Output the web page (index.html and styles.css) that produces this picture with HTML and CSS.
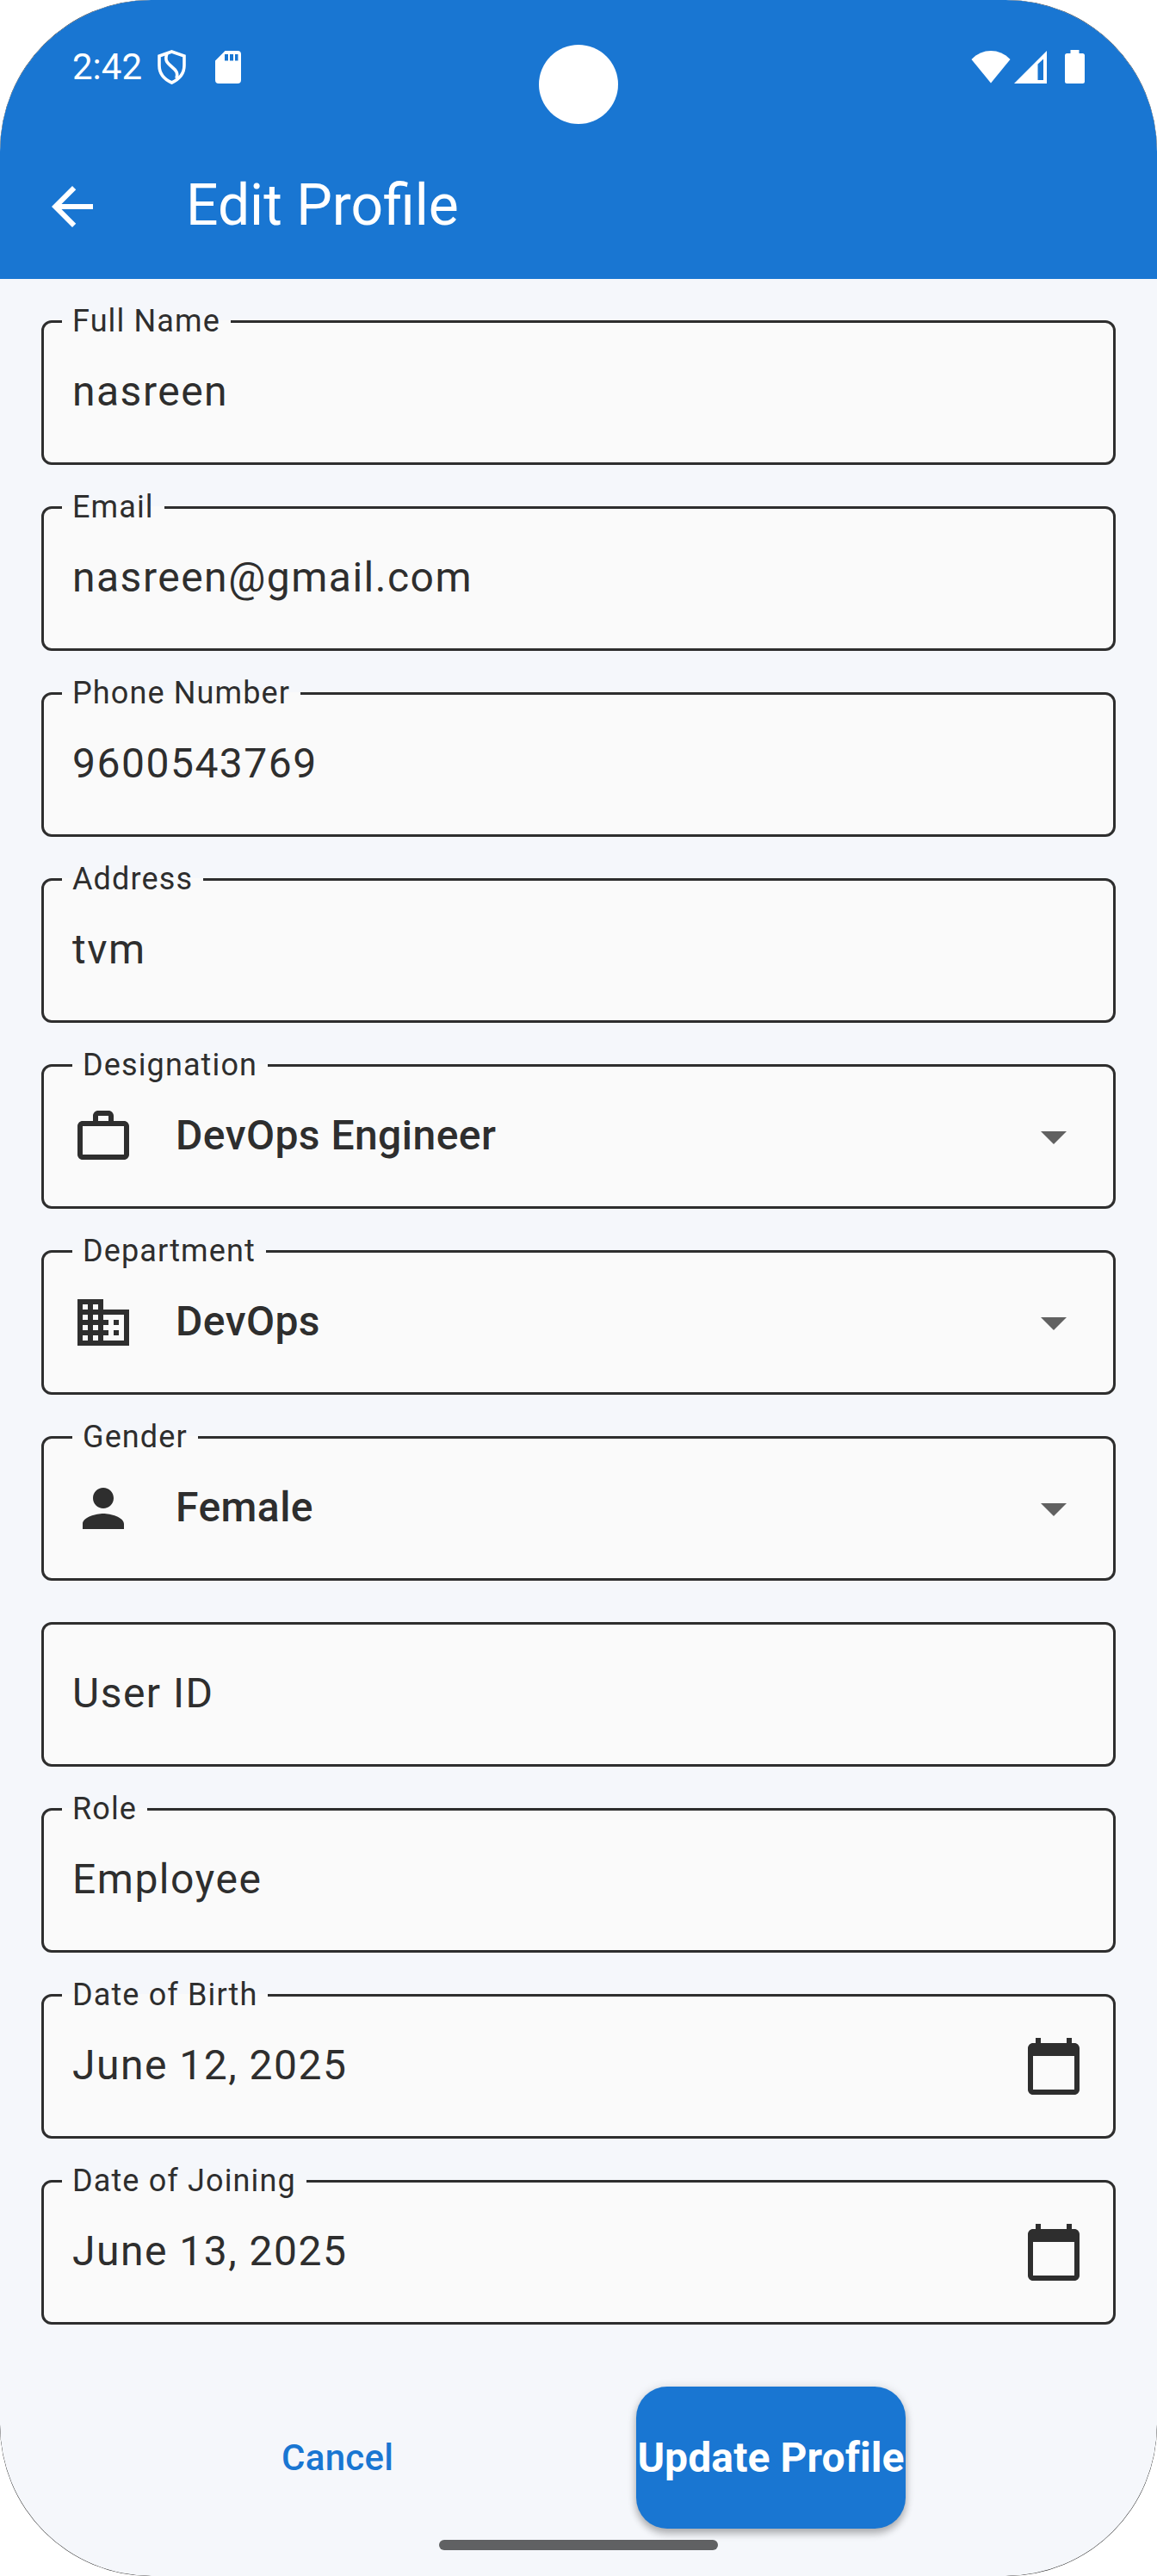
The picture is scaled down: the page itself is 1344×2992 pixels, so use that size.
FILE: index.html
```html
<!DOCTYPE html>
<html lang="en">
<head>
<meta charset="utf-8">
<title>Edit Profile</title>
<link rel="stylesheet" href="styles.css">
</head>
<body>
<div class="device">
<div class="screen">
  <header class="top">
    <div class="status">
      <span class="clock">2:42</span>
      <svg class="shield" width="34" height="42" viewBox="0 0 34 42" fill="none" stroke="#fff" stroke-width="3.600"><path d="M17.500 3L32 8V19C32 28 26 35 17.500 39C8.500 35 3 28 3 19V8Z"/><path d="M12 5C9 13 12 16 18 21C23 25 25 28 23 34"/></svg>
      <svg class="sd" width="30" height="38" viewBox="0 0 30 38" fill="#fff"><path fill-rule="evenodd" d="M11.500 0H26a4 4 0 0 1 4 4V34a4 4 0 0 1-4 4H4a4 4 0 0 1-4-4V11.500ZM11 4v7.500h4V4ZM17 4v7.500h4V4ZM23 4v7.500h3.500V4Z"/></svg>
      <span class="camera"></span>
      <svg class="wifi" width="46" height="38" viewBox="0 0 46 38" fill="#fff"><path d="M0.500 10C13-3.300 33-3.300 45.500 10L23 37.500Z"/></svg>
      <svg class="signal" width="38" height="38" viewBox="0 0 38 38" fill="#fff"><path fill-rule="evenodd" d="M38 0V38H0ZM34 9.500L27.500 15.500V34H34Z"/></svg>
      <svg class="battery" width="23" height="39" viewBox="0 0 23 39" fill="#fff"><path d="M6.500 0h10v4h4a2.500 2.500 0 0 1 2.500 2.500V36.500a2.500 2.500 0 0 1-2.500 2.500H2.500a2.500 2.500 0 0 1-2.500-2.500V6.500A2.500 2.500 0 0 1 2.500 4H6.500Z"/></svg>
    </div>
    <div class="appbar">
      <svg class="icon back" viewBox="0 0 24 24"><path d="M20 11H7.830l5.590-5.590L12 4l-8 8 8 8 1.410-1.410L7.830 13H20v-2z"/></svg>
      <h1 class="title">Edit Profile</h1>
    </div>
  </header>
  <main class="form">
    <fieldset class="field"><legend>Full Name</legend><div class="body"><span class="value">nasreen</span></div></fieldset>
    <fieldset class="field"><legend>Email</legend><div class="body"><span class="value">nasreen@gmail.com</span></div></fieldset>
    <fieldset class="field"><legend>Phone Number</legend><div class="body"><span class="value">9600543769</span></div></fieldset>
    <fieldset class="field"><legend>Address</legend><div class="body"><span class="value">tvm</span></div></fieldset>
    <fieldset class="field select"><legend>Designation</legend><div class="body">
      <svg class="icon" viewBox="0 0 24 24"><path fill-rule="evenodd" d="M14 6V4h-4v2h4zM4 8v11h16V8H4zm16-2c1.110 0 2 .89 2 2v11c0 1.110-.89 2-2 2H4c-1.110 0-2-.89-2-2l.01-11c0-1.110.88-2 1.990-2h4V4c0-1.110.89-2 2-2h4c1.110 0 2 .89 2 2v2h4z"/></svg>
      <span class="value">DevOps Engineer</span>
      <svg class="icon caret" viewBox="0 0 24 24"><path d="M7 10l5 5 5-5z"/></svg></div></fieldset>
    <fieldset class="field select"><legend>Department</legend><div class="body">
      <svg class="icon" viewBox="0 0 24 24"><path d="M12 7V3H2v18h20V7H12zM6 19H4v-2h2v2zm0-4H4v-2h2v2zm0-4H4V9h2v2zm0-4H4V5h2v2zm4 12H8v-2h2v2zm0-4H8v-2h2v2zm0-4H8V9h2v2zm0-4H8V5h2v2zm10 12h-8v-2h2v-2h-2v-2h2v-2h-2V9h8v10zm-2-8h-2v2h2v-2zm0 4h-2v2h2v-2z"/></svg>
      <span class="value">DevOps</span>
      <svg class="icon caret" viewBox="0 0 24 24"><path d="M7 10l5 5 5-5z"/></svg></div></fieldset>
    <fieldset class="field select"><legend>Gender</legend><div class="body">
      <svg class="icon" viewBox="0 0 24 24"><path d="M12 12c2.210 0 4-1.790 4-4s-1.790-4-4-4-4 1.790-4 4 1.790 4 4 4zm0 2c-2.670 0-8 1.340-8 4v2h16v-2c0-2.660-5.330-4-8-4z"/></svg>
      <span class="value">Female</span>
      <svg class="icon caret" viewBox="0 0 24 24"><path d="M7 10l5 5 5-5z"/></svg></div></fieldset>
    <fieldset class="field"><div class="body"><span class="value">User ID</span></div></fieldset>
    <fieldset class="field"><legend>Role</legend><div class="body"><span class="value">Employee</span></div></fieldset>
    <fieldset class="field"><legend>Date of Birth</legend><div class="body"><span class="value">June 12, 2025</span>
      <svg class="icon" viewBox="0 0 24 24"><path d="M20 3h-1V1h-2v2H7V1H5v2H4c-1.100 0-2 .9-2 2v16c0 1.100.9 2 2 2h16c1.100 0 2-.9 2-2V5c0-1.100-.9-2-2-2zm0 18H4V8h16v13z"/></svg></div></fieldset>
    <fieldset class="field"><legend>Date of Joining</legend><div class="body"><span class="value">June 13, 2025</span>
      <svg class="icon" viewBox="0 0 24 24"><path d="M20 3h-1V1h-2v2H7V1H5v2H4c-1.100 0-2 .9-2 2v16c0 1.100.9 2 2 2h16c1.100 0 2-.9 2-2V5c0-1.100-.9-2-2-2zm0 18H4V8h16v13z"/></svg></div></fieldset>
  </main>
  <footer class="actions">
    <button class="cancel">Cancel</button>
    <button class="update">Update Profile</button>
  </footer>
  <div class="home"></div>
</div>
</div>
</body>
</html>
```
FILE: styles.css
```css
* { box-sizing: border-box; }
body { margin: 0; background: #fff; font-family: Roboto, "Liberation Sans", sans-serif; color: #2e2e2e; }
.device { width: 1344px; height: 2992px; border-radius: 175px; background: #222; overflow: hidden; }
.screen { width: 1344px; height: 2992px; border-radius: 176px; background: #f5f7fb; overflow: hidden; display: flex; flex-direction: column; }

.top { height: 324px; background: #1976d2; color: #fff; flex: none; }
.status { height: 156px; display: flex; align-items: flex-start; padding-left: 84px; }
.clock { font-size: 42px; line-height: 50px; width: 98px; margin-top: 53px; white-space: nowrap; }
.status svg { flex: none; }
.shield { margin-top: 57px; }
.sd { margin: 59px 0 0 34px; }
.camera { width: 92px; height: 92px; border-radius: 50%; background: #fff; margin: 52px 0 0 346px; flex: none; }
.wifi { margin: 59px 0 0 410px; }
.signal { margin: 59px 0 0 4px; }
.battery { margin: 58px 0 0 21px; }
.appbar { height: 168px; display: flex; align-items: center; padding-left: 48px; }
.icon { width: 72px; height: 72px; fill: #2e2e2e; flex: none; display: block; }
.back { fill: #fff; }
.title { margin: 0 0 2px 96px; font-size: 66px; line-height: 84px; font-weight: 400; }

.form { padding: 48px 48px 0; display: flex; flex-direction: column; gap: 48px; flex: none; }
.field { margin: 0; padding: 0; min-width: 0; height: 168px; border: 3px solid #2e2e2e; border-radius: 12px; background: #fafafa; }
.field legend { height: 3px; line-height: 3px; margin-left: 21px; padding: 0 12px; font-size: 36px; letter-spacing: 1.125px; white-space: nowrap; }
.select legend { margin-left: 33px; }
.body { height: 162px; display: flex; align-items: center; padding: 0 33px; }
.value { flex: 1; font-size: 48px; line-height: 72px; letter-spacing: 1.5px; margin-bottom: 2px; }
.select .value { font-weight: 500; letter-spacing: 0.45px; margin-left: 48px; }
.caret { fill: #616161; }

.actions { display: flex; align-items: center; padding: 72px 0 0 327px; flex: none; }
.actions button { border: 0; padding: 0; background: none; font-family: inherit; white-space: nowrap; }
.cancel { width: 412px; text-align: left; font-size: 42px; font-weight: 500; letter-spacing: 0.3px; color: #1976d2; }
.actions .update { width: 313px; height: 165px; border-radius: 36px; background: #1976d2; color: #fff; font-size: 48px; font-weight: 700; letter-spacing: 0.1px; box-shadow: 0 6px 9px rgba(0,0,0,.24), 0 1px 12px rgba(0,0,0,.14); }
.home { width: 324px; height: 12px; border-radius: 6px; background: #606163; margin: 13px 0 0 510px; flex: none; }
```
